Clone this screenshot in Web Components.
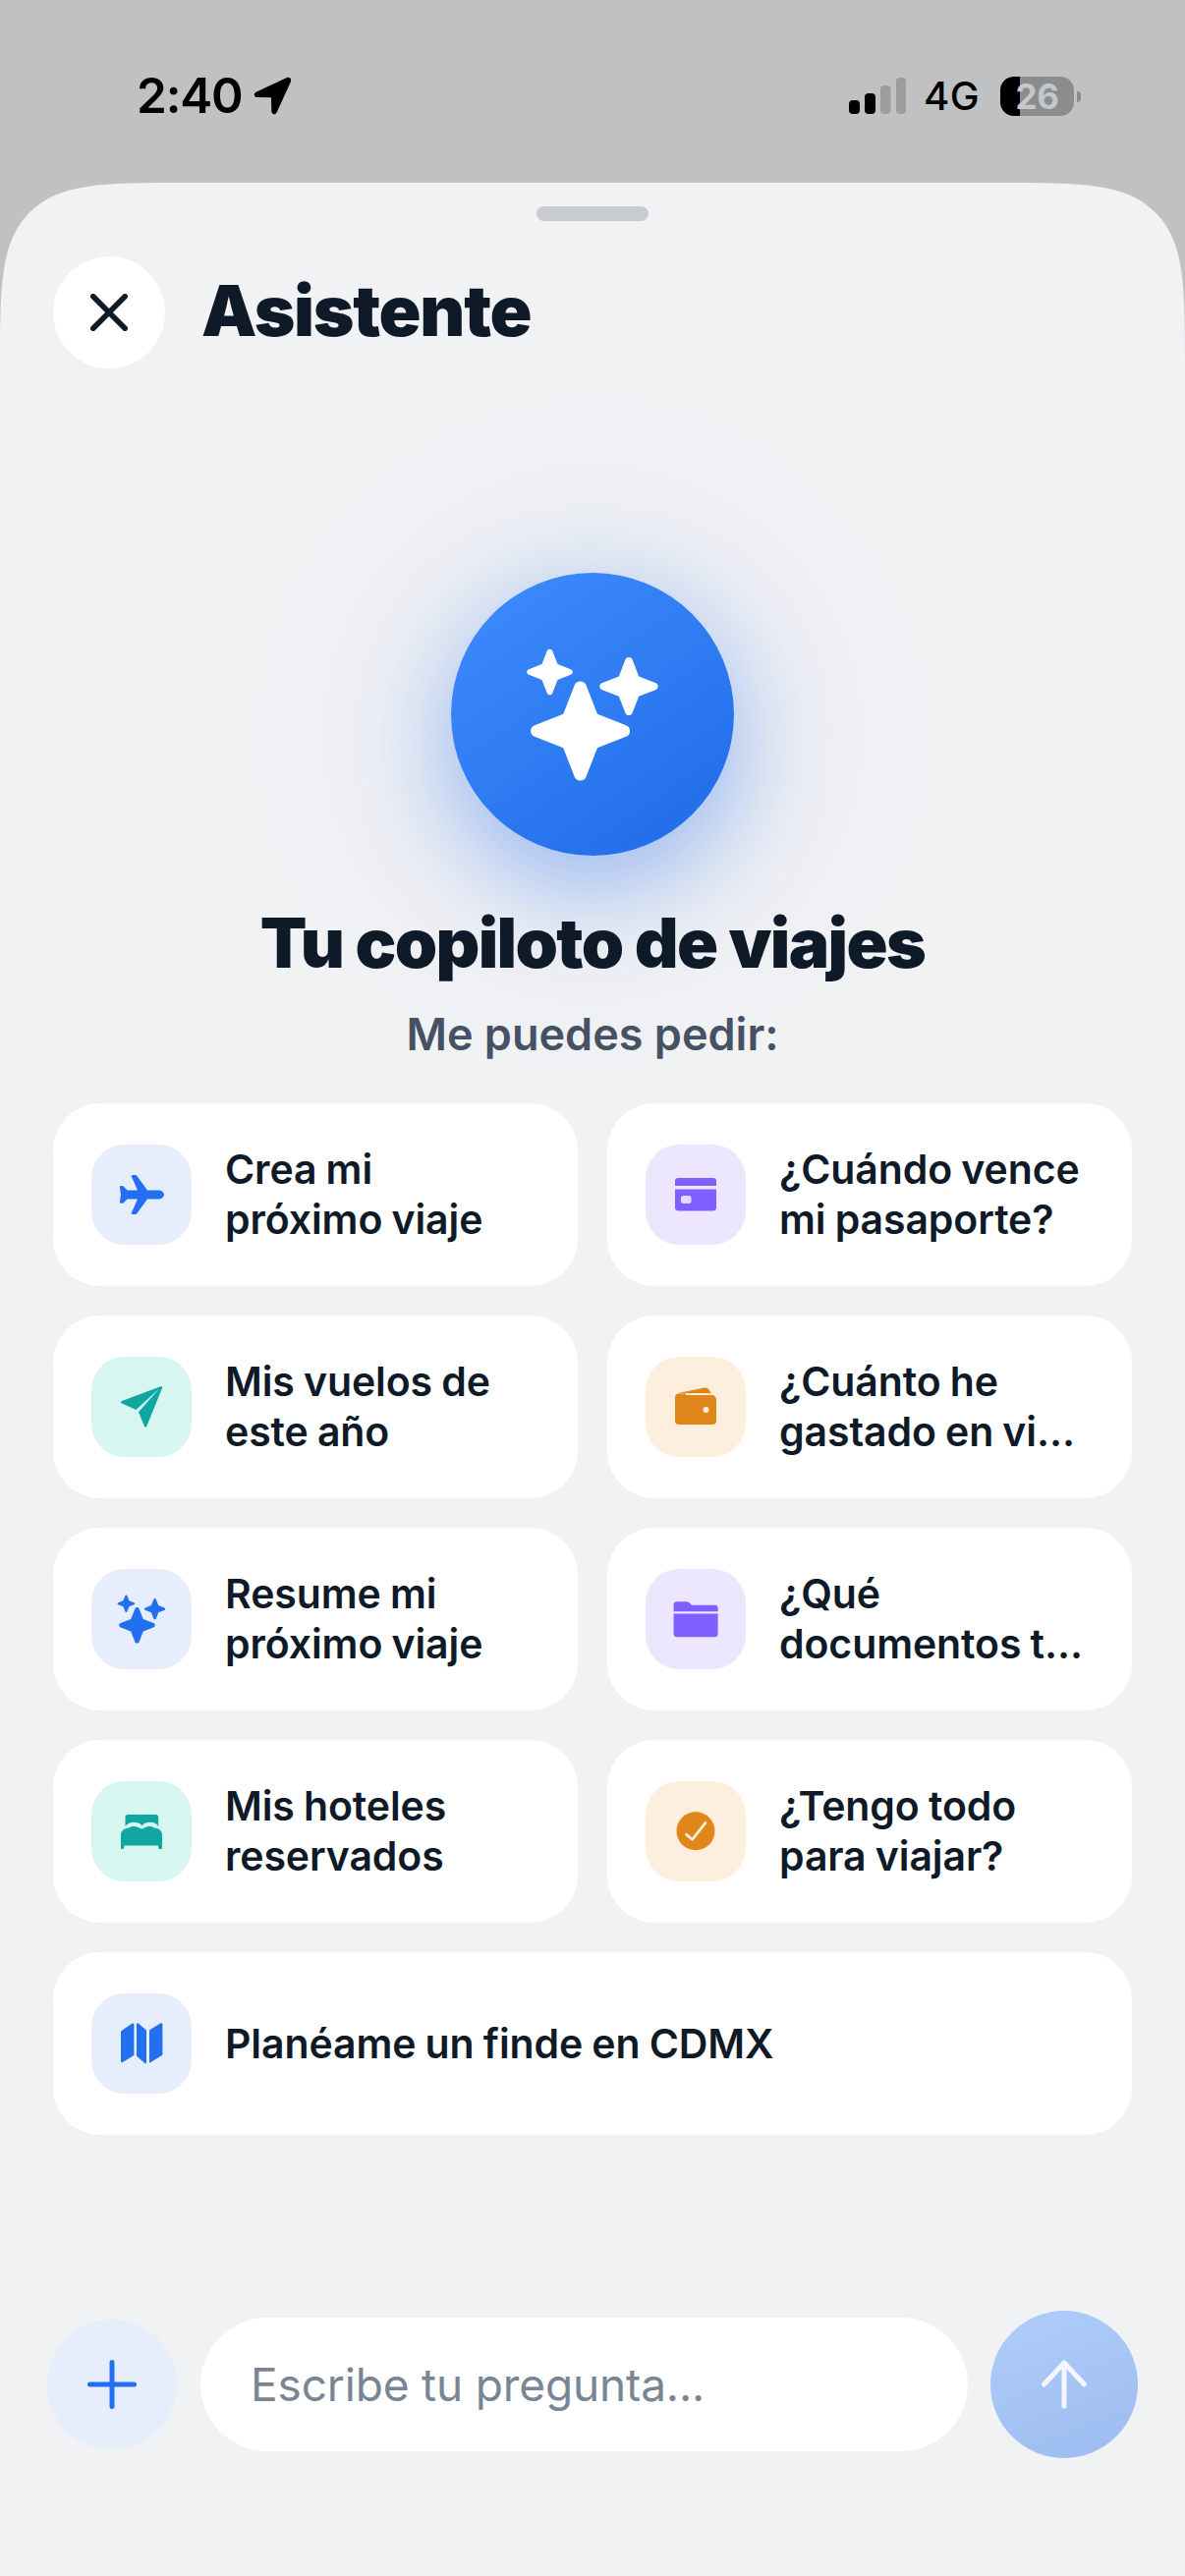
<!doctype html>
<html lang="es"><head><meta charset="utf-8"><title>Asistente</title>
<style>
html,body{margin:0;padding:0;background:#c0c1c3}
body{width:1206px;height:2622px;overflow:hidden;font-family:Inter,"Noto Sans",sans-serif}
</style></head>
<body>
<app-screen>
  <status-bar slot="status"></status-bar>
  <assistant-sheet>
    <sheet-header>Asistente</sheet-header>
    <copilot-hero title-text="Tu copiloto de viajes" sub-text="Me puedes pedir:"></copilot-hero>
    <prompt-grid>
      <prompt-card icon="plane" tone="blue">Crea mi<br>próximo viaje</prompt-card>
      <prompt-card icon="card" tone="purple">¿Cuándo vence<br>mi pasaporte?</prompt-card>
      <prompt-card icon="send" tone="teal">Mis vuelos de<br>este año</prompt-card>
      <prompt-card icon="wallet" tone="orange">¿Cuánto he<br>gastado en vi...</prompt-card>
      <prompt-card icon="sparkles" tone="blue">Resume mi<br>próximo viaje</prompt-card>
      <prompt-card icon="folder" tone="purple">¿Qué<br>documentos t...</prompt-card>
      <prompt-card icon="bed" tone="teal">Mis hoteles<br>reservados</prompt-card>
      <prompt-card icon="check" tone="orange">¿Tengo todo<br>para viajar?</prompt-card>
      <prompt-card icon="map" tone="blue" wide>Planéame un finde en CDMX</prompt-card>
    </prompt-grid>
    <composer-bar placeholder="Escribe tu pregunta..."></composer-bar>
  </assistant-sheet>
</app-screen>
<script>
const STAR='M-6 -45C-4.5 -51 4.5 -51 6 -45L17 -17L45 -6C51 -4.5 51 4.5 45 6L17 17L6 45C4.5 51 -4.5 51 -6 45L-17 17L-45 6C-51 4.5 -51 -4.5 -45 -6L-17 -17Z';
const star=(cx,cy,s)=>`<path transform="translate(${cx} ${cy}) scale(${s})" d="${STAR}"/>`;
const ICONS={
plane:`<path d="M74 51c0 2.5-3 4.5-6 4.5H57L46.5 70c-.5.8-1.5 1-2.5 1h-2c-1 0-1.5-.8-1.2-1.6L47 55.5H36.5L33 59c-.5.5-1 .8-1.5.8h-1.6c-.8 0-1.2-.6-1-1.2L30 51l-1.1-7.6c-.2-.8.2-1.4 1-1.4h1.6c.5 0 1 .3 1.5.8l3.5 3.7H47L40.8 32.6c-.3-.8.2-1.6 1.2-1.6h2c1 0 2 .2 2.5 1L57 46.5h11c3 0 6 2 6 4.5z" fill="currentColor"/>`,
send:`<path d="M70.5 30.2 31 45c-1.4.5-1.4 1.6-.2 2.2L45.3 54 69 32.5 48 56.3l6 14.4c.6 1.3 2 1.2 2.4-.1L72 32c.4-1.3-.3-2.2-1.500-1.800z" fill="currentColor"/>`,
card:`<path d="M33 34h36a3 3 0 0 1 3 3v5H30v-5a3 3 0 0 1 3-3z" fill="currentColor"/><path d="M30 45.500h42V64a3.500 3.500 0 0 1-3.500 3.500h-35A3.500 3.500 0 0 1 30 64z" fill="currentColor"/><rect x="36" y="52" width="10.500" height="8" rx="2.500" fill="#e2dbff"/>`,
wallet:`<path d="M32 37.300 60 31.500c2-.4 3.500.2 4.500 2L67 37.300z" fill="currentColor"/><path d="M34 37.500h7v1.500h26c3 0 5 2 5 5v21c0 2.500-1.500 4-4 4H34c-2.500 0-4-1.500-4-4V41.500c0-2.500 1.500-4 4-4z" fill="currentColor"/><rect x="41" y="37.200" width="25" height="1.700" fill="#feeedd"/><circle cx="61.500" cy="54" r="3" fill="#feeedd"/>`,
sparkles:`<g fill="currentColor">${star(46.5,57.3,.37)}${star(35.4,35.3,.178)}${star(64.6,40.7,.215)}</g>`,
folder:`<path d="M32 33.300h9c2 0 3 .6 4.500 2l1.500 1.400h23.600c1.800 0 3 1.300 3 3v3.600h-45V36.300c0-1.800 1.200-3 3-3z" fill="currentColor"/><path d="M28.600 45.500h45V66c0 2-1.300 3.300-3.200 3.300H31.800c-1.900 0-3.200-1.300-3.200-3.300z" fill="currentColor"/>`,
bed:`<path d="M37.500 34h28c1.700 0 2.700 1 2.700 2.700V46c-2-3.200-5-4.300-8-4.300-4 0-6.500.8-8.700 3.500-2.200-2.700-4.700-3.500-8.700-3.500-3 0-6 1.100-8.300 4.300v-9.300c0-1.700 1-2.700 3-2.700z" fill="currentColor"/><path d="M38 47.800c2-1.500 5-2.200 8-1.300 2.500.7 3.500 2 5.200 2 1.700 0 2.700-1.300 5.200-2 3-.9 6-.2 8 1.300 4 0 7.600 2.700 7.600 6.700V68c0 .6-.5 1-1.100 1h-1.500c-.6 0-1-.4-1-1l-.4-2.500H33.500l-.4 2.500c0 .6-.4 1-1 1h-1c-.6 0-1.100-.4-1.100-1V54.500c0-4 4-6.700 8-6.700z" fill="currentColor"/>`,
check:`<circle cx="51" cy="50.700" r="19.500" fill="currentColor"/><path d="M41.500 54.300l6 5 13.500-17" fill="none" stroke="#fdeedc" stroke-width="2.700" stroke-linecap="round" stroke-linejoin="round"/>`,
map:`<g fill="currentColor"><path d="M30 39.500c0-.6.2-1 .6-1.400l11-7.500c.8-.5 1.800-.1 1.800.9V63l-11.500 7c-1 .6-1.900-.1-1.900-1z"/><path d="M46 31.300c0-1 1-1.400 1.700-.8l7.700 6.400c.4.300.6.800.6 1.400v32c0 1-1 1.400-1.700.8L46 63.700z"/><path d="M59 38.300c0-.6.200-1 .6-1.400l10.600-6.400c1-.6 2.200 0 2.200 1.100V61.700c0 .6-.2 1-.6 1.400L59 71z"/></g>`
};
function def(name,html,setup){customElements.define(name,class extends HTMLElement{
  constructor(){super();this.attachShadow({mode:'open'}).innerHTML=typeof html==='function'?html(this):html;}
  connectedCallback(){if(setup)setup(this,this.shadowRoot);}
});}

def('app-screen',`<style>:host{display:flex;flex-direction:column;width:1206px;height:2622px;background:#c0c1c3;overflow:hidden}</style><slot name="status"></slot><slot></slot>`);

def('status-bar',`<style>
:host{display:flex;box-sizing:border-box;height:186px;padding:78px 106px 0 139px;justify-content:space-between;align-items:flex-start;color:#000}
.l{display:flex;align-items:center;gap:12px;height:39px}
.t{font:600 49.500px/39px Inter,sans-serif;letter-spacing:-1.200px}
.r{display:flex;align-items:flex-start}
.sig{display:block;margin-top:1px}
.g{font:500 40px/39px Inter,sans-serif;margin-left:18px;width:59px;letter-spacing:.4px}
.b{box-sizing:border-box;width:75px;height:40px;margin-left:19px;border-radius:14px;background:linear-gradient(90deg,#000 20px,#8b8c8e 20px);color:#c6c7c9;font:700 35px/40px Inter,sans-serif;text-align:center;letter-spacing:-.5px}
.n{width:4px;height:11px;margin:15px 0 0 3px;background:#8b8c8e;border-radius:0 6px 6px 0}
svg{display:block}
</style>
<div class="l"><span class="t">2:40</span>
<svg width="38" height="39" viewBox="262 78 38 39"><path d="M296 79 265 93.500c-3.500 1.700-2.500 5.500 1 5.500l14 .3.300 14c.1 3.500 4 4.200 5.400 1L300 83c1-2.800-1.500-5.200-4-4z"/></svg></div>
<div class="r">
<svg class="sig" width="58" height="37" viewBox="0 0 58 37"><rect x="0" y="23" width="11" height="14" rx="4"/><rect x="16" y="16" width="11" height="21" rx="4"/><rect x="32" y="8" width="10.500" height="29" rx="4" fill="#9c9d9f"/><rect x="48" y="0" width="10" height="37" rx="4" fill="#9c9d9f"/></svg>
<span class="g">4G</span><span class="b">26</span><span class="n"></span></div>`);

def('assistant-sheet',`<style>
:host{display:flex;flex-direction:column;flex:1;min-height:0;box-sizing:border-box;background:#f1f2f4;border-radius:190px 190px 0 0;corner-shape:squircle}
.h{align-self:center;width:114px;height:15px;margin-top:24px;border-radius:8px;background:#c9cbd3;flex:none}
</style><div class="h"></div><slot></slot>`);

def('sheet-header',`<style>
:host{display:flex;align-items:center;gap:37px;margin:36px 54px 0;height:114px;color:#0f1a28}
.c{flex:none;width:114px;height:114px;border-radius:50%;background:#fff;display:flex;align-items:center;justify-content:center}
h1{margin:-4px 0 0;font:900 71px/1 Inter,sans-serif;letter-spacing:-1.300px}
svg{display:block}
</style><div class="c"><svg width="38" height="38" viewBox="0 0 38 38"><path d="M2.800 2.800 35.200 35.200M35.200 2.800 2.800 35.200" stroke="#0f1a28" stroke-width="5.600" stroke-linecap="round"/></svg></div><h1><slot></slot></h1>`);

def('copilot-hero',h=>`<style>
:host{display:flex;flex-direction:column;align-items:center;margin-top:208px;position:relative}
.o{position:relative;width:288px;height:288px}
.halo{position:absolute;left:-206px;top:-186px;width:700px;height:700px;border-radius:50%;background:radial-gradient(circle closest-side,rgba(40,110,235,.07) 40%,rgba(40,110,235,.028) 62%,rgba(40,110,235,.01) 82%,rgba(40,110,235,0) 100%)}
.c{position:absolute;inset:0;border-radius:50%;background:linear-gradient(145deg,#3f8dff,#1f6ae6);box-shadow:0 30px 96px rgba(32,105,235,.36)}
.c svg{position:absolute;inset:0}
h2{position:relative;margin:49px 0 0;font:900 69.500px/80px Inter,sans-serif;color:#0f1a28;letter-spacing:-1.650px}
p{position:relative;margin:25px 0 0;font:600 45px/56px Inter,sans-serif;color:#465263}
</style><div class="o"><div class="halo"></div><div class="c"><svg width="288" height="288" viewBox="459 584 288 288" fill="#fff">${star(590.6,745,1.02)}${star(559.5,685,.47)}${star(640,699.6,.6)}</svg></div></div><h2></h2><p></p>`,(h,s)=>{s.querySelector('h2').textContent=h.getAttribute('title-text');s.querySelector('p').textContent=h.getAttribute('sub-text');});

def('prompt-grid',`<style>:host{display:grid;grid-template-columns:534px 534px;gap:30px;margin:42px 54px 0}</style><slot></slot>`);

const TONES={blue:['#e6edfc','#2270f0'],purple:['#ece6ff','#7f5fff'],teal:['#d7f6f1','#10a7a1'],orange:['#feeedd','#e0871c']};
def('prompt-card',h=>{const t=TONES[h.getAttribute('tone')];return `<style>
:host{display:flex;align-items:center;box-sizing:border-box;height:186px;padding:0 39px;gap:34px;background:#fff;border-radius:48px;color:#0f1a28;font:600 41px/51px Inter,sans-serif;white-space:nowrap;letter-spacing:-.1px;word-spacing:-1px}
:host([wide]){grid-column:1 / -1}
.i{flex:none;width:102px;height:102px;border-radius:34px;background:${t[0]};color:${t[1]}}
svg{display:block}
</style><div class="i"><svg width="102" height="102" viewBox="0 0 102 102">${ICONS[h.getAttribute('icon')]}</svg></div><div><slot></slot></div>`;});

def('composer-bar',h=>`<style>
:host{display:flex;align-items:center;margin-top:auto;padding:0 48px 120px}
.p{flex:none;width:132px;height:132px;border-radius:50%;background:#e6edfb;display:flex;align-items:center;justify-content:center}
.f{flex:1;height:136px;margin:0 23px 0 24px;box-sizing:border-box;padding:0 51px;border-radius:68px;background:#fff;font:400 46px/136px Inter,sans-serif;color:#7a8594;letter-spacing:-.15px}
.s{flex:none;width:150px;height:150px;border-radius:50%;background:linear-gradient(160deg,#b0cdf9,#9cbcf0);display:flex;align-items:center;justify-content:center}
svg{display:block}
</style><div class="p"><svg width="50" height="50" viewBox="0 0 50 50"><path d="M25 2.500v45M2.500 25h45" stroke="#2270f0" stroke-width="5" stroke-linecap="round"/></svg></div>
<div class="f">${h.getAttribute('placeholder')}</div>
<div class="s"><svg width="48" height="50" viewBox="0 0 48 50"><path d="M24 47V3M3.500 25 24 3l20.500 22" fill="none" stroke="#f4f7fd" stroke-width="5" stroke-linecap="round" stroke-linejoin="round"/></svg></div>`);
</script>
</body></html>
